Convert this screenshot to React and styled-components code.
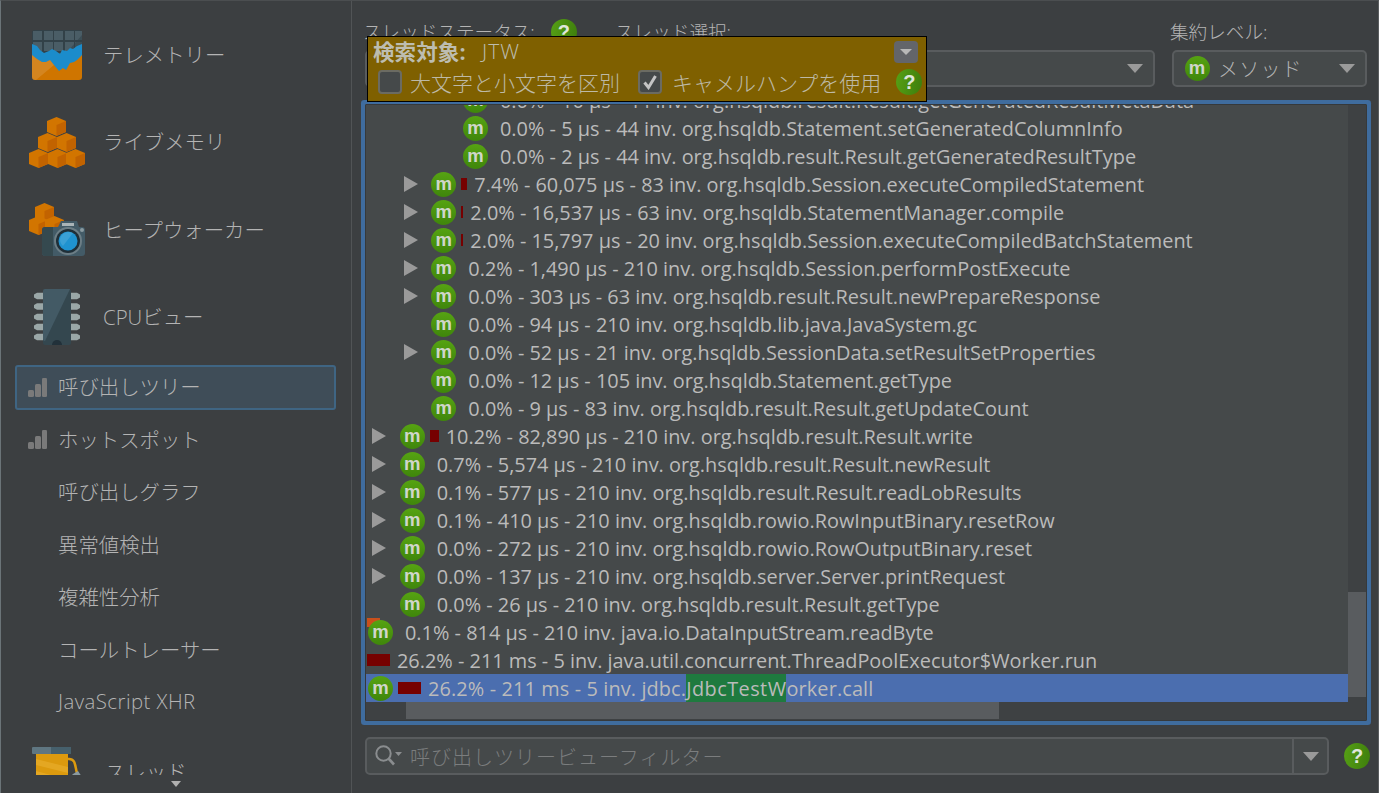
import React from "react";
import styled, { createGlobalStyle } from "styled-components";

const LATIN = '"Open Sans", "Noto Sans CJK JP", sans-serif';

const Global = createGlobalStyle`
  html, body { margin: 0; padding: 0; background: #3c3f41; }
  * { box-sizing: border-box; }
`;

const Root = styled.div`
  width: 1379px;
  height: 793px;
  display: grid;
  grid-template-columns: 351px 1fr;
  background: #3c3f41;
  border-top: 1px solid #4b4e50;
  border-left: 1px solid #6b7478;
  border-right: 1px solid #5a5d5f;
  color: #bbbbbb;
  font-family: ${LATIN};
  font-size: 20px;
  overflow: hidden;
`;

/* ---------- sidebar ---------- */
const Sidebar = styled.aside`
  display: flex;
  flex-direction: column;
  height: 792px;
  border-right: 1px solid #515456;
`;
const SideViewport = styled.div`
  height: 774px;
  padding-top: 10px;
  overflow: hidden;
  flex: none;
`;
const SideHint = styled.div`
  flex: 1;
  display: flex;
  justify-content: center;
  align-items: center;
`;
const BigItem = styled.div`
  height: 87.5px;
  display: flex;
  align-items: center;
  padding-left: 28px;
  gap: ${(p) => p.$gap ?? 18}px;
`;
const BigIcon = styled.div`
  width: 56px;
  display: flex;
  justify-content: center;
  flex: none;
`;
const SideLabel = styled.span`
  font-weight: 300;
  font-size: 20.4px;
  color: #b4b4b4;
  white-space: nowrap;
  padding-bottom: 2px;
  letter-spacing: ${(p) => (p.$latin ? "0.45px" : "0")};
`;
const SmallList = styled.div`
  display: flex;
  flex-direction: column;
  gap: 7.5px;
  padding: 3.75px 15px 3.75px 14px;
`;
const SmallItem = styled.div`
  height: 45px;
  padding-left: 11px;
  display: flex;
  align-items: center;
  gap: 10px;
  border: 2px solid ${(p) => (p.$active ? "#3f6583" : "transparent")};
  border-radius: 3px;
  background: ${(p) => (p.$active ? "#3f4d58" : "transparent")};
`;
const SmallSlot = styled.div`
  width: 20px;
  flex: none;
  display: flex;
  align-items: center;
`;

const BarsIcon = () => (
  <svg width="20" height="19" viewBox="0 0 20 19" fill="#7a7a7a">
    <rect x="0" y="12" width="6" height="7" rx="1.5" />
    <rect x="7" y="6" width="6" height="13" rx="1.5" />
    <rect x="14" y="0" width="5" height="19" rx="1.2" />
  </svg>
);

const Cube = ({ x, y }) => (
  <g transform={`translate(${x} ${y})`}>
    <path d="M0 4 9.5 0 19 4V15L9.5 19 0 15Z" fill="#d27500" />
    <path d="M9.5 8 19 4V15L9.5 19Z" fill="#c26300" />
  </g>
);

const TelemetryIcon = () => (
  <svg width="50" height="50" viewBox="0 0 50 50">
    <rect width="50" height="50" rx="3" fill="#324148" />
    {[1, 12, 22, 33, 43].map((x) =>
      [1, 12, 23].map((y) => <rect key={`${x}-${y}`} x={x} y={y} width="9" height="9" fill="#4a5d66" />)
    )}
    <path d="M30 28 50 5V25H30Z" fill="#324148" opacity=".55" />
    <path d="M0 14 5 16 8 20 12 23 17 21 20 19 24 21 28 24 30 20 35 21 38 18 41 19 45 16 50 14V47H0Z" fill="#1b8ccb" />
    <path d="M0 25 5 29 10 32 14 32 18 30 22 35 27 41 31 38 34 40 38 33 42 32 45 30 50 25V47a3 3 0 0 1-3 3H3a3 3 0 0 1-3-3Z" fill="#cf7500" />
    <path d="M0 25 5 29 10 32 14 32 18 30 22 35 4 50H3a3 3 0 0 1-3-3Z" fill="#fff" opacity=".12" />
  </svg>
);

const MemoryIcon = () => (
  <svg width="56" height="51" viewBox="0 0 56 51">
    <Cube x="18" y="0" />
    <Cube x="9" y="16" />
    <Cube x="28" y="16" />
    <Cube x="0" y="32" />
    <Cube x="19" y="32" />
    <Cube x="37" y="32" />
  </svg>
);

const HeapIcon = () => (
  <svg width="56" height="54" viewBox="0 0 56 54">
    <Cube x="6" y="0" />
    <Cube x="0" y="13" />
    <Cube x="16" y="13" />
    <path d="M13 26a3 3 0 0 1 3-2H29l3-6H48l2 6h3a3 3 0 0 1 3 3V50a3 3 0 0 1-3 3H16a3 3 0 0 1-3-3Z" fill="#435b67" />
    <path d="M13 26a3 3 0 0 1 3-2H24V53H16a3 3 0 0 1-3-3Z" fill="#35494f" />
    <rect x="33" y="20" width="12" height="3" fill="#a9b4b8" />
    <circle cx="53" cy="27" r="2" fill="#8a9aa0" />
    <circle cx="39" cy="38" r="14" fill="#6c7e86" />
    <circle cx="39" cy="38" r="12" fill="#1f2f38" />
    <circle cx="39" cy="38" r="9.5" fill="#1f93d0" />
    <path d="M31 36a9 9 0 0 1 13-6L34 43a9 9 0 0 1-3-7Z" fill="#fff" opacity=".12" />
  </svg>
);

const CpuIcon = () => (
  <svg width="46" height="56" viewBox="0 0 46 56">
    {[7, 17.5, 28, 38, 48].map((y) => (
      <g key={y} fill="#9aa7a7">
        <path d={`M0 ${y - 1.5} 3 ${y - 3.2}H9V${y + 3.2}H3L0 ${y + 1.5}Z`} />
        <path d={`M37 ${y - 3.2}H43L46 ${y - 1.5}V${y + 1.5}L43 ${y + 3.2}H37Z`} />
      </g>
    ))}
    <rect x="9" y="0" width="28" height="56" rx="2" fill="#34474f" />
    <path d="M11 0H36L11 52Q9 52 9 50V2Q9 0 11 0Z" fill="#435a65" />
    <path d="M18 56a5 5 0 0 1 10 0Z" fill="#22313a" />
  </svg>
);

const SpoolIcon = () => (
  <svg width="50" height="50" viewBox="0 0 50 50">
    <rect x="4" y="7" width="32" height="36" fill="#dc9a0e" />
    <path d="M4 12 36 20V26L4 18ZM4 24 30 31V37L4 30Z" fill="#e9b030" opacity=".6" />
    <path d="M36 12C44 11 43 20 45 26" fill="none" stroke="#dc9a0e" strokeWidth="2.5" />
    <path d="M41 27 46 24 50 30H38Z" fill="#8b9aa0" />
    <rect x="0" y="0" width="39" height="7" rx="1" fill="#5f7681" />
    <rect x="19" y="0" width="20" height="7" fill="#46606c" />
  </svg>
);

/* ---------- shared small parts ---------- */
const MethodBadge = styled.span`
  position: relative;
  width: 25px;
  height: 25px;
  flex: none;
  border-radius: 50%;
  background: linear-gradient(#56a312, #3f860b);
  color: #d0d6ca;
  font-family: "Liberation Sans", sans-serif;
  font-weight: 700;
  font-size: 18.5px;
  line-height: 23px;
  text-align: center;
`;
const Corner = styled.span`
  position: absolute;
  left: -1px;
  top: -2px;
  width: 13px;
  height: 9px;
  background: #c9501c;
`;
const BadgeWrap = styled.span`
  position: relative;
  display: inline-flex;
  flex: none;
`;
const Help = styled.span`
  width: 26px;
  height: 26px;
  flex: none;
  border-radius: 50%;
  background: linear-gradient(100deg, #56a015, #3e7d0c);
  color: #dfe6da;
  font-family: "Liberation Sans", sans-serif;
  font-weight: 700;
  font-size: 20px;
  line-height: 26px;
  text-align: center;
`;
const DownArrow = styled.span`
  width: 0;
  height: 0;
  flex: none;
  border-left: ${(p) => p.$half || 8}px solid transparent;
  border-right: ${(p) => p.$half || 8}px solid transparent;
  border-top: ${(p) => p.$tall || 9}px solid ${(p) => p.$color || "#9a9a9a"};
`;

/* ---------- right pane ---------- */
const Pane = styled.main`
  position: relative;
  display: flex;
  flex-direction: column;
  height: 792px;
  padding: 16px 11px 0 13px;
`;
const Toolbar = styled.div`
  display: grid;
  grid-template-columns: 235px 1fr 195px;
  column-gap: 17px;
  height: 70px;
  flex: none;
`;
const Field = styled.div`
  display: flex;
  flex-direction: column;
  gap: 3px;
`;
const FieldLabel = styled.div`
  height: 30px;
  margin-left: -2px;
  display: flex;
  align-items: center;
  gap: 16px;
  font-size: 18.6px;
  font-weight: 300;
  white-space: nowrap;
  color: #b4b4b4;
`;
const FieldText = styled.span`
  padding-bottom: 3px;
`;
const Combo = styled.div`
  height: 37px;
  display: flex;
  align-items: center;
  justify-content: space-between;
  padding: 0 10px 0 11px;
  background: #45494a;
  border: 2px solid #595c5e;
  border-radius: 5px;
`;
const ComboValue = styled.span`
  display: flex;
  align-items: center;
  gap: 8px;
  font-size: 20px;
  font-weight: 300;
  letter-spacing: 1.2px;
  color: #b4b4b4;
`;

const TreeBox = styled.div`
  margin-top: 17px;
  height: 617px;
  flex: none;
  display: grid;
  grid-template-columns: 1fr 18px;
  grid-template-rows: 1fr 18px;
  border: 1px solid #36393b;
  border-radius: 1px;
  box-shadow: 0 0 0 4px #3f6c9e;
  background: #45494a;
  overflow: hidden;
`;
const TreeViewport = styled.div`
  overflow: hidden;
  display: flex;
  flex-direction: column;
  justify-content: flex-end;
`;
const Row = styled.div`
  height: 28px;
  flex: none;
  display: flex;
  align-items: center;
  padding-left: ${(p) => (p.$bare ? 1 : p.$level === 0 ? 2 : (p.$level - 1) * 31.67 + 6)}px;
  background: ${(p) => (p.$selected ? "#4b6eaf" : "transparent")};
  letter-spacing: ${(p) => (p.$selected ? "0.12px" : "0")};
  white-space: nowrap;
  font-size: 19.9px;
  color: #bbbbbb;
`;
const Twisty = styled.span`
  width: 27.67px;
  flex: none;
  display: flex;
  align-items: center;
  &::before {
    content: "";
    display: ${(p) => (p.$hidden ? "none" : "block")};
    border-left: 14px solid #9a9a9a;
    border-top: 8px solid transparent;
    border-bottom: 8px solid transparent;
  }
`;
const CostBar = styled.span`
  height: 12px;
  flex: none;
  background: #760000;
  margin: 0 7px 0 ${(p) => (p.$flush ? 0 : 5)}px;
`;
const RowText = styled.span`
  margin-left: ${(p) => (p.$tight ? 0 : 12)}px;
`;
const Match = styled.span`
  background: #1f7a3f;
  padding: 1px 0;
  letter-spacing: 0.45px;
`;
const VTrack = styled.div`
  background: #3e4143;
  display: flex;
  flex-direction: column;
  justify-content: flex-end;
  padding-bottom: 5px;
`;
const VThumb = styled.div`
  height: 105px;
  background: #595c5f;
`;
const HTrack = styled.div`
  background: #3e4143;
  padding-left: 40px;
`;
const HThumb = styled.div`
  width: 593px;
  height: 17px;
  background: #595c5f;
`;
const ScrollCorner = styled.div`
  background: #3e4143;
`;

const FilterRow = styled.div`
  margin-top: 16px;
  display: flex;
  align-items: center;
  gap: 15px;
  margin-right: -3px;
`;
const FilterBox = styled.div`
  flex: 1;
  height: 38px;
  display: flex;
  align-items: center;
  background: #45494a;
  border: 2px solid #595c5e;
  border-radius: 5px;
  padding-left: 8px;
`;
const Placeholder = styled.span`
  flex: 1;
  margin-left: 7px;
  font-size: 20px;
  font-weight: 300;
  letter-spacing: 1px;
  color: #7b7d7e;
`;
const FilterDrop = styled.div`
  width: 35px;
  height: 100%;
  border-left: 2px solid #595c5e;
  display: flex;
  align-items: center;
  justify-content: center;
`;

const SearchIcon = () => (
  <svg width="28" height="22" viewBox="0 0 28 22" fill="none">
    <circle cx="8.5" cy="8.5" r="7.2" stroke="#8a8d8f" strokeWidth="2" />
    <path d="M13.5 13.5 19 19.5" stroke="#8a8d8f" strokeWidth="2.6" />
    <path d="M20 7H27L23.5 11Z" fill="#8a8d8f" />
  </svg>
);

/* ---------- search popup ---------- */
const Popup = styled.div`
  position: absolute;
  left: 15px;
  top: 35px;
  width: 560px;
  height: 66px;
  background: #7f6000;
  border: 1px solid #000;
  padding: 0 5px;
  display: flex;
  flex-direction: column;
`;
const PopupTop = styled.div`
  height: 30px;
  display: flex;
  align-items: center;
  color: #bdbdb0;
`;
const PopupTitle = styled.span`
  font-weight: 700;
  font-size: 21.6px;
  width: 109px;
  white-space: nowrap;
  padding-bottom: 3px;
`;
const PopupQuery = styled.span`
  flex: 1;
  font-size: 21px;
  font-weight: 300;
  letter-spacing: 1px;
  padding-bottom: 3px;
`;
const PopupDrop = styled.span`
  width: 24px;
  height: 22px;
  margin-right: 3px;
  border-radius: 4px;
  background: #63656a;
  display: flex;
  align-items: center;
  justify-content: center;
`;
const PopupBottom = styled.div`
  display: flex;
  align-items: center;
  height: 30px;
  padding-left: 5px;
`;
const Check = styled.span`
  width: 24px;
  height: 24px;
  flex: none;
  border-radius: 4px;
  background: #45494a;
  border: 2px solid #6b6b62;
  display: flex;
  align-items: center;
  justify-content: center;
`;
const CheckLabel = styled.span`
  margin-left: ${(p) => p.$ml}px;
  margin-right: ${(p) => p.$mr}px;
  font-size: 21px;
  font-weight: 300;
  color: #bdb9a6;
  white-space: nowrap;
`;

const CheckMark = () => (
  <svg width="16" height="16" viewBox="0 0 16 16" fill="none">
    <path d="M2.5 8.5 6.5 13.5 13.5 2" stroke="#c4c4c4" strokeWidth="3" />
  </svg>
);

/* ---------- data ---------- */
const ROWS = [
  { level: 3, t: "0.0% - 10 μs - 44 inv. org.hsqldb.result.Result.getGeneratedResultMetaData" },
  { level: 3, t: "0.0% - 5 μs - 44 inv. org.hsqldb.Statement.setGeneratedColumnInfo" },
  { level: 3, t: "0.0% - 2 μs - 44 inv. org.hsqldb.result.Result.getGeneratedResultType" },
  { level: 2, arrow: 1, bar: 6, t: "7.4% - 60,075 μs - 83 inv. org.hsqldb.Session.executeCompiledStatement" },
  { level: 2, arrow: 1, bar: 2, t: "2.0% - 16,537 μs - 63 inv. org.hsqldb.StatementManager.compile" },
  { level: 2, arrow: 1, bar: 2, t: "2.0% - 15,797 μs - 20 inv. org.hsqldb.Session.executeCompiledBatchStatement" },
  { level: 2, arrow: 1, t: "0.2% - 1,490 μs - 210 inv. org.hsqldb.Session.performPostExecute" },
  { level: 2, arrow: 1, t: "0.0% - 303 μs - 63 inv. org.hsqldb.result.Result.newPrepareResponse" },
  { level: 2, t: "0.0% - 94 μs - 210 inv. org.hsqldb.lib.java.JavaSystem.gc" },
  { level: 2, arrow: 1, t: "0.0% - 52 μs - 21 inv. org.hsqldb.SessionData.setResultSetProperties" },
  { level: 2, t: "0.0% - 12 μs - 105 inv. org.hsqldb.Statement.getType" },
  { level: 2, t: "0.0% - 9 μs - 83 inv. org.hsqldb.result.Result.getUpdateCount" },
  { level: 1, arrow: 1, bar: 9, t: "10.2% - 82,890 μs - 210 inv. org.hsqldb.result.Result.write" },
  { level: 1, arrow: 1, t: "0.7% - 5,574 μs - 210 inv. org.hsqldb.result.Result.newResult" },
  { level: 1, arrow: 1, t: "0.1% - 577 μs - 210 inv. org.hsqldb.result.Result.readLobResults" },
  { level: 1, arrow: 1, t: "0.1% - 410 μs - 210 inv. org.hsqldb.rowio.RowInputBinary.resetRow" },
  { level: 1, arrow: 1, t: "0.0% - 272 μs - 210 inv. org.hsqldb.rowio.RowOutputBinary.reset" },
  { level: 1, arrow: 1, t: "0.0% - 137 μs - 210 inv. org.hsqldb.server.Server.printRequest" },
  { level: 1, t: "0.0% - 26 μs - 210 inv. org.hsqldb.result.Result.getType" },
  { level: 0, corner: 1, t: "0.1% - 814 μs - 210 inv. java.io.DataInputStream.readByte" },
  { level: 0, noIcon: 1, bar: 23, t: "26.2% - 211 ms - 5 inv. java.util.concurrent.ThreadPoolExecutor$Worker.run" },
];

const TreeRow = ({ level, arrow, bar, t, corner, noIcon }) => (
  <Row $level={level} $bare={noIcon}>
    {level > 0 && <Twisty $hidden={!arrow} />}
    {!noIcon && (
      <BadgeWrap>
        {corner && <Corner />}
        <MethodBadge>m</MethodBadge>
      </BadgeWrap>
    )}
    {bar && <CostBar $flush={noIcon} style={{ width: bar }} />}
    <RowText $tight={!!bar}>{t}</RowText>
  </Row>
);

const SMALL = ["呼び出しグラフ", "異常値検出", "複雑性分析", "コールトレーサー"];

export default function App() {
  return (
    <Root>
      <Global />
      <Sidebar>
        <SideViewport>
          <BigItem>
            <BigIcon><TelemetryIcon /></BigIcon>
            <SideLabel>テレメトリー</SideLabel>
          </BigItem>
          <BigItem>
            <BigIcon><MemoryIcon /></BigIcon>
            <SideLabel>ライブメモリ</SideLabel>
          </BigItem>
          <BigItem>
            <BigIcon><HeapIcon /></BigIcon>
            <SideLabel>ヒープウォーカー</SideLabel>
          </BigItem>
          <BigItem>
            <BigIcon><CpuIcon /></BigIcon>
            <SideLabel>CPUビュー</SideLabel>
          </BigItem>
          <SmallList>
            <SmallItem $active>
              <SmallSlot><BarsIcon /></SmallSlot>
              <SideLabel>呼び出しツリー</SideLabel>
            </SmallItem>
            <SmallItem>
              <SmallSlot><BarsIcon /></SmallSlot>
              <SideLabel>ホットスポット</SideLabel>
            </SmallItem>
            {SMALL.map((s) => (
              <SmallItem key={s}>
                <SmallSlot />
                <SideLabel>{s}</SideLabel>
              </SmallItem>
            ))}
            <SmallItem>
              <SmallSlot />
              <SideLabel $latin>JavaScript XHR</SideLabel>
            </SmallItem>
          </SmallList>
          <BigItem $gap={20}>
            <BigIcon><SpoolIcon /></BigIcon>
            <SideLabel>スレッド</SideLabel>
          </BigItem>
        </SideViewport>
        <SideHint>
          <DownArrow $color="#b0b0b0" $half={5} $tall={6} />
        </SideHint>
      </Sidebar>

      <Pane>
        <Toolbar>
          <Field>
            <FieldLabel><FieldText>スレッドステータス:</FieldText><Help>?</Help></FieldLabel>
            <Combo />
          </Field>
          <Field>
            <FieldLabel><FieldText>スレッド選択:</FieldText></FieldLabel>
            <Combo><span /><DownArrow /></Combo>
          </Field>
          <Field>
            <FieldLabel><FieldText>集約レベル:</FieldText></FieldLabel>
            <Combo>
              <ComboValue><MethodBadge>m</MethodBadge>メソッド</ComboValue>
              <DownArrow />
            </Combo>
          </Field>
        </Toolbar>

        <TreeBox>
          <TreeViewport>
            {ROWS.map((r) => <TreeRow key={r.t} {...r} />)}
            <Row $level={0} $selected>
              <BadgeWrap><MethodBadge>m</MethodBadge></BadgeWrap>
              <CostBar style={{ width: 23 }} />
              <RowText $tight>
                26.2% - 211 ms - 5 inv. jdbc.<Match>JdbcTestW</Match>orker.call
              </RowText>
            </Row>
          </TreeViewport>
          <VTrack><VThumb /></VTrack>
          <HTrack><HThumb /></HTrack>
          <ScrollCorner />
        </TreeBox>

        <FilterRow>
          <FilterBox>
            <SearchIcon />
            <Placeholder>呼び出しツリービューフィルター</Placeholder>
            <FilterDrop><DownArrow /></FilterDrop>
          </FilterBox>
          <Help>?</Help>
        </FilterRow>

        <Popup>
          <PopupTop>
            <PopupTitle>検索対象:</PopupTitle>
            <PopupQuery>JTW</PopupQuery>
            <PopupDrop>
              <DownArrow $color="#b8b8b8" $half={6} $tall={6} />
            </PopupDrop>
          </PopupTop>
          <PopupBottom>
            <Check />
            <CheckLabel $ml={8} $mr={18}>大文字と小文字を区別</CheckLabel>
            <Check><CheckMark /></Check>
            <CheckLabel $ml={10} $mr={15}>キャメルハンプを使用</CheckLabel>
            <Help>?</Help>
          </PopupBottom>
        </Popup>
      </Pane>
    </Root>
  );
}
